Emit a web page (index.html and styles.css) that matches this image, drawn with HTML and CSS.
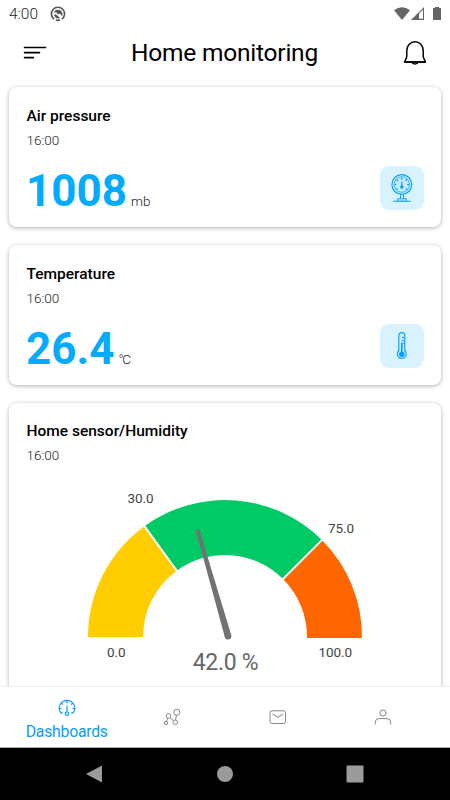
FILE: index.html
```html
<!DOCTYPE html>
<html lang="en">
<head>
    <meta charset="utf-8">
    <meta name="viewport" content="width=device-width, initial-scale=1.0">
    <title>Home monitoring</title>
    <link rel="stylesheet" href="styles.css">
</head>
<body>
<div class="app">
    <div class="status-bar">
        <span class="clock">4:00</span>
        <svg class="status-app" width="16" height="16" viewBox="0 0 16 16">
            <path d="M4.200 13.200A6.600 6.600 0 1 1 11.800 13.200M6 14q2 .8 4 0" fill="none" stroke="#555" stroke-width="1.600"/>
            <path d="M3.600 6.600A4.600 4.600 0 0 1 12.200 10.200L10 7.400 8 8.400 6.300 6.300z" fill="#555"/>
            <path d="M4 8.800l1.800-.6 4.200 3.800A4.200 4.200 0 0 1 4 8.800z" fill="#555"/>
        </svg>
        <svg class="status-icons" width="50" height="16" viewBox="0 0 50 16">
            <path d="M1 4.300Q9 -2 17 4.300L9 14z" fill="#666"/>
            <path d="M31 1v13H18z" fill="#666"/>
            <path d="M30 3.600v9.200h-4V7.400z" fill="#fff"/>
            <path d="M40 2h2V1h4v1h2v12h-8z" fill="#666"/>
        </svg>
    </div>

    <header class="header">
        <svg width="24" height="14" viewBox="0 0 24 14">
            <path d="M1.500 1.500h21M1.500 6.600h15M1.500 11.600h9" stroke="#000" stroke-width="1.600" stroke-linecap="round"/>
        </svg>
        <h1>Home monitoring</h1>
        <svg width="26" height="26" viewBox="0 0 26 26">
            <path d="M4.800 16V10.500a8.200 8.800 0 0 1 16.400 0V16c0 3 2.200 4.300 2.200 6.100H2.600C2.600 20.300 4.800 19 4.800 16z" fill="none" stroke="#000" stroke-width="1.500" stroke-linejoin="round"/>
            <path d="M2 22h22" stroke="#000" stroke-width="1.600"/>
            <path d="M9.800 22.500a3.400 2.200 0 0 0 6.400 0" fill="none" stroke="#000" stroke-width="1.400"/>
        </svg>
    </header>

    <main class="cards">
        <section class="card">
            <h2>Air pressure</h2>
            <p class="time">16:00</p>
            <div class="reading">
                <span class="value">1008</span>
                <span class="unit">mb</span>
                <div class="tile">
                    <svg width="44" height="44" viewBox="0 0 44 44" fill="none" stroke="#03a1f5">
                        <circle cx="21.800" cy="18.500" r="9.900" stroke-width="1.100"/>
                        <circle cx="21.800" cy="18.500" r="7.800" stroke-width=".8" fill="#c5ecff"/>
                        <path d="M21.800 11.500v2.500M16.500 13.500l1.500 1.500M27 13.500l-1.500 1.500M14.500 18.500h2M27 18.500h2M16.300 23.500l1.400-1.200M27.200 23.500l-1.400-1.200" stroke-width="1.100"/>
                        <path d="M21.800 15.500v5" stroke-width="1.200"/>
                        <circle cx="21.800" cy="21" r="1.700" fill="#03a1f5" stroke="none"/>
                        <path d="M20.500 28.500v4M23.500 28.500v4" stroke-width="1"/>
                        <path d="M17.500 35v-2.300h9V35" fill="#9adcff" stroke-width=".8"/>
                        <path d="M13.200 35.300h17.500" stroke-width="1"/>
                    </svg>
                </div>
            </div>
        </section>

        <section class="card">
            <h2>Temperature</h2>
            <p class="time">16:00</p>
            <div class="reading">
                <span class="value">26.4</span>
                <span class="unit celsius">°C</span>
                <div class="tile">
                    <svg width="44" height="44" viewBox="0 0 44 44" fill="none" stroke="#03a1f5">
                        <path d="M18.800 26.500V11.600a3 3 0 0 1 6 0V26.500a4.500 4.500 0 1 1-6 0z" fill="#c5ecff" stroke-width="1.100"/>
                        <path d="M21.800 18.500v11" stroke-width="1.600"/>
                        <circle cx="21.800" cy="30.200" r="2.700" fill="#03a1f5" stroke="none"/>
                        <path d="M22 13.500h2.700M22 16.500h2.700M23 19.500h1.700" stroke-width=".9"/>
                    </svg>
                </div>
            </div>
        </section>

        <section class="card gauge-card">
            <h2>Home sensor/Humidity</h2>
            <p class="time">16:00</p>
            <!-- half ring, centre 216,157, radii 137 and 82 -->
            <svg class="gauge" width="432" height="210" viewBox="0 0 432 210">
                <path d="M79 157A137 137 0 0 1 135.500 46.200L167.800 90.700A82 82 0 0 0 134 157z" fill="#ffcd00"/>
                <path d="M135.500 46.200A137 137 0 0 1 312.900 60.100L274 99A82 82 0 0 0 167.800 90.700z" fill="#00ca66"/>
                <path d="M312.900 60.100A137 137 0 0 1 353 158H298A82 82 0 0 0 274 99z" fill="#ff6600"/>
                <path d="M134.900 45.400L168.400 91.500M313.600 59.400L273.300 99.700" stroke="#fff" stroke-width="2"/>
                <path d="M187.200 52L215.800 157L222.200 155L190.800 51z" fill="#727272"/>
                <circle cx="189" cy="51.500" r="1.900" fill="#727272"/>
                <circle cx="219" cy="156" r="3.400" fill="#727272"/>
                <text class="tick" x="118.500" y="23">30.0</text>
                <text class="tick" x="319" y="53">75.0</text>
                <text class="tick" x="98" y="177">0.0</text>
                <text class="tick" x="309.500" y="177">100.0</text>
                <text class="percent" x="216.500" y="190">42.0 %</text>
            </svg>
        </section>
    </main>

    <nav class="tabs">
        <a class="tab active">
            <svg width="18" height="18" viewBox="0 0 18 18" fill="none" stroke="currentColor" stroke-width="1.200">
                <path d="M4.800 13.800H2.700A7.800 7.800 0 1 1 15.300 13.800H13.200M1.500 9.500h2M14.500 9.500h2M3.600 4.300l1.300 1.300M14.400 4.300l-1.300 1.300M9 2v2.200M9 6.500v6.500"/>
                <circle cx="9" cy="14.700" r="1.700"/>
            </svg>
            <span>Dashboards</span>
        </a>
        <a class="tab">
            <svg width="18" height="18" viewBox="0 0 18 18" fill="none" stroke="currentColor">
                <circle cx="3" cy="15" r="1.700"/>
                <circle cx="5.500" cy="8" r="2.300"/>
                <circle cx="12.200" cy="14.300" r="2.300"/>
                <circle cx="13.800" cy="4.300" r="3"/>
                <path d="M4.800 10.200L3.500 13.400M7.200 9.700L10.500 12.700M13.400 7.300L12.600 12"/>
            </svg>
        </a>
        <a class="tab">
            <svg width="18" height="18" viewBox="0 0 18 18" fill="none" stroke="currentColor">
                <rect x="1" y="2.800" width="15.500" height="12.700" rx="2"/>
                <path d="M3.500 6L8.800 9.300L14.200 6"/>
            </svg>
        </a>
        <a class="tab">
            <svg width="18" height="18" viewBox="0 0 18 18" fill="none" stroke="currentColor">
                <circle cx="9" cy="5" r="3.100"/>
                <path d="M1.200 16.500V14.500Q1.200 10.600 5 10.600H13Q16.700 10.600 16.700 14.500V16.500"/>
            </svg>
        </a>
    </nav>

    <div class="system-bar">
        <svg width="18" height="18" viewBox="0 0 18 18"><path d="M1 9L17 0.500V17.500z"/></svg>
        <svg width="18" height="18" viewBox="0 0 18 18"><circle cx="9" cy="9" r="8"/></svg>
        <svg width="18" height="18" viewBox="0 0 18 18"><rect x=".5" y=".5" width="17" height="17" rx="1"/></svg>
    </div>
</div>
</body>
</html>
```
FILE: styles.css
```css
* {
    margin: 0;
    padding: 0;
    box-sizing: border-box;
}
body {
    font-family: Roboto, sans-serif;
    background: #fff;
    color: #000;
}
svg {
    display: block;
    flex-shrink: 0;
}
.app {
    width: 450px;
    height: 800px;
    display: flex;
    flex-direction: column;
    overflow: hidden;
}
.status-bar {
    height: 27px;
    padding: 0 7px 0 9px;
    display: flex;
    align-items: center;
}
.clock {
    font-size: 15.5px;
    font-weight: 300;
    color: #222;
}
.status-app {
    margin-left: 12px;
}
.status-icons {
    margin-left: auto;
}
.header {
    height: 51px;
    padding: 0 22px 0 23px;
    display: flex;
    align-items: center;
    justify-content: space-between;
}
.header h1 {
    font-size: 24.5px;
    font-weight: 400;
    letter-spacing: -0.22px;
}
.cards {
    flex: 1;
    min-height: 0;
    padding: 9px 9px 0;
    display: flex;
    flex-direction: column;
    gap: 18px;
    overflow: hidden;
}
.card {
    height: 140px;
    padding: 19px 18px 0 17.5px;
    flex-shrink: 0;
    border-radius: 8px;
    background: #fff;
    box-shadow: 0 1px 4px rgba(0, 0, 0, 0.32);
}
.gauge-card {
    height: 320px;
    padding-top: 18px;
}
.card h2 {
    font-size: 15.5px;
    line-height: 21px;
    font-weight: 500;
}
.time {
    margin-top: 4px;
    font-size: 13.5px;
    line-height: 19px;
    font-weight: 300;
    color: #222;
}
.reading {
    display: flex;
    align-items: baseline;
    height: 60px;
}
.value {
    margin-left: -0.5px;
    font-size: 44px;
    line-height: 83px;
    font-weight: 700;
    color: #03abff;
}
.unit {
    margin-left: 4px;
    font-size: 13.5px;
    font-weight: 300;
    color: #222;
}
.celsius {
    letter-spacing: -1.3px;
}
.tile {
    width: 44px;
    height: 44px;
    margin: 16px -1px 0 auto;
    align-self: flex-start;
    border-radius: 9px;
    background: #d8f2ff;
}
.gauge {
    margin: 15px -18px 0 -17.5px;
}
.tick {
    font-size: 13.5px;
    letter-spacing: -0.1px;
    fill: #444;
}
.percent {
    font-size: 23px;
    letter-spacing: -0.3px;
    fill: #666;
    text-anchor: middle;
}
.tabs {
    height: 62px;
    padding: 0 14px;
    display: flex;
    background: #fff;
    border-top: 1px solid #efefef;
    border-bottom: 1px solid #aaa;
}
.tab {
    flex: 1;
    display: flex;
    flex-direction: column;
    align-items: center;
    justify-content: center;
    color: #858585;
}
.tab.active {
    color: #0a9cf5;
    padding-top: 7px;
    gap: 5px;
    font-size: 15.8px;
    line-height: 20px;
    letter-spacing: -0.25px;
}
.system-bar {
    height: 52px;
    background: #000;
    display: flex;
    align-items: center;
    justify-content: space-between;
    padding: 0 86px 0 85px;
    fill: #9b9b9b;
}
```
